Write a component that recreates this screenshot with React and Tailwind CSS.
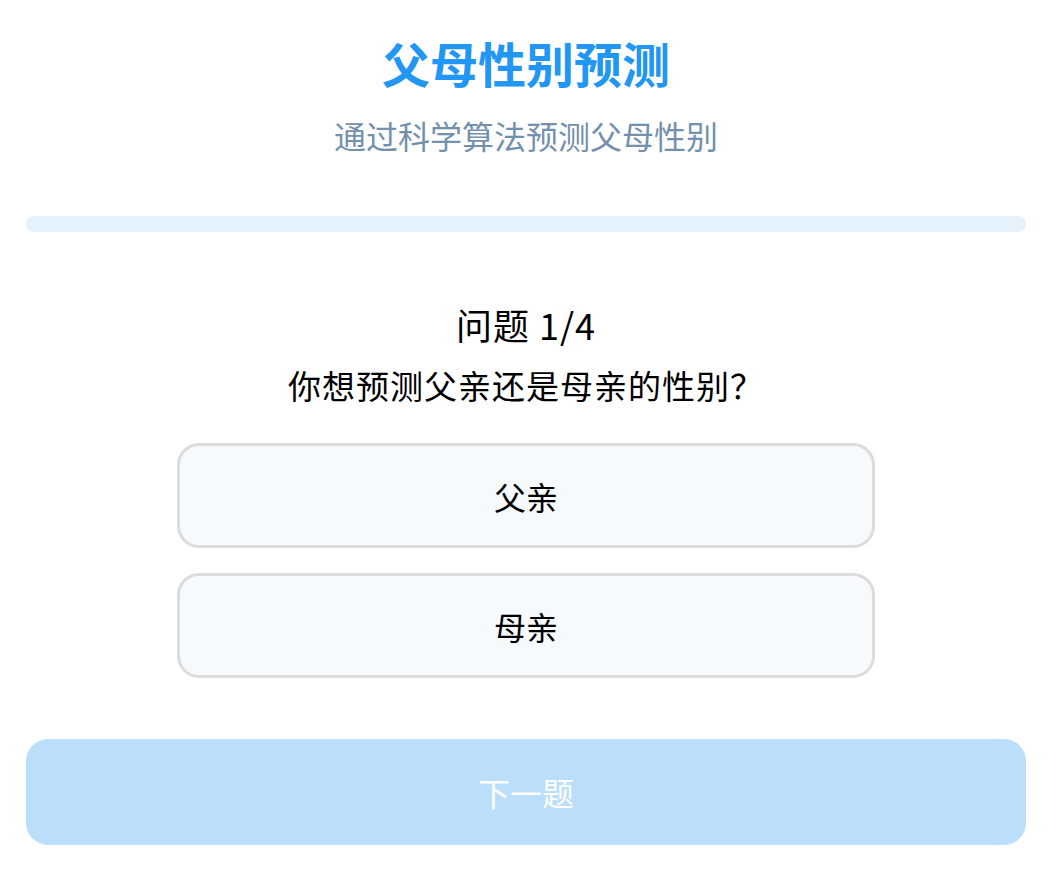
const font = { fontFamily: '"Noto Sans CJK SC", "Noto Sans", sans-serif' };

function Option({ label }) {
  return (
    <button className="w-[698px] h-[105px] rounded-[22px] border-[3px] border-[#dcdcdc] bg-[#f7fafd] text-[32px] text-black flex items-center justify-center">
      {label}
    </button>
  );
}

export default function App() {
  return (
    <div className="min-h-[876px] bg-white pl-[26px] pr-[34px]" style={font}>
      <div className="flex flex-col items-center pt-[33px]">
        <h1 className="text-[48px] leading-[58px] font-bold text-[#2196f3]">父母性别预测</h1>
        <p className="mt-[24px] text-[32px] leading-[40px] text-[#7390ad]">通过科学算法预测父母性别</p>
      </div>

      <div className="mt-[61px] h-4 w-full rounded-full bg-[#e3f2fd]" />

      <div className="mt-[72px] flex flex-col items-center text-black">
        <h2 className="text-[36px] leading-[40px] tracking-[1px]">问题 1/4</h2>
        <p className="mt-[21px] text-[33px] leading-[40px] tracking-[1px]">你想预测父亲还是母亲的性别？</p>
        <div className="mt-[38px] flex flex-col gap-[25px]">
          <Option label="父亲" />
          <Option label="母亲" />
        </div>
      </div>

      <button className="mt-[61px] w-full h-[106px] rounded-[22px] bg-[#bbdefb] text-white text-[32px]">
        下一题
      </button>
    </div>
  );
}
